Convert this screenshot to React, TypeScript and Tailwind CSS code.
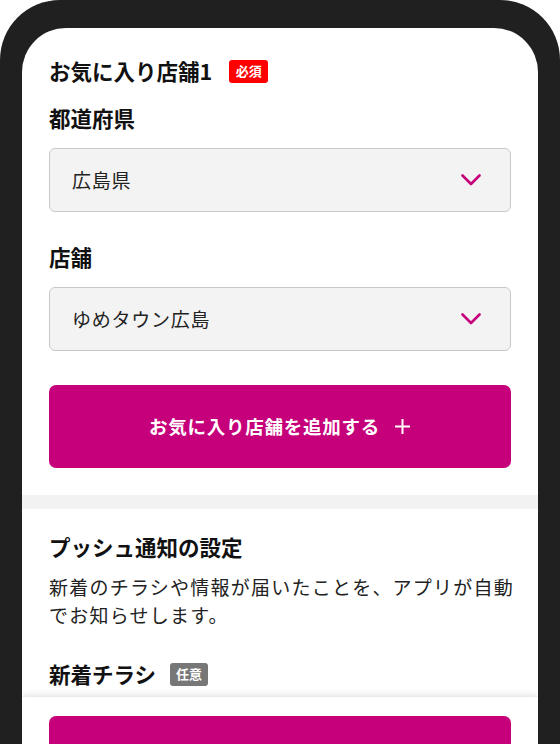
import React from "react";

const Chevron = () => (
  <svg width="20" height="12" viewBox="0 0 20 12" fill="none">
    <polyline points="1.5,1.5 10,10 18.5,1.5" stroke="#c6007a" strokeWidth="2.6" strokeLinecap="round" strokeLinejoin="round" />
  </svg>
);

const Select = ({ value }: { value: string }) => (
  <div className="h-[64px] rounded-[6px] border border-[#c8c8c8] bg-[#f3f3f3] flex items-center justify-between pl-[22px] pr-[29px]">
    <span className="text-[19px] tracking-[0.04em] text-[#222]">{value}</span>
    <Chevron />
  </div>
);

export default function App() {
  return (
    <div
      className="w-[560px] h-[744px] bg-white overflow-hidden"
      style={{ fontFamily: '"Noto Sans CJK JP", "Noto Sans", sans-serif' }}
    >
      <div className="h-full rounded-t-[60px] bg-[#202020] pt-[28px] px-[22px]">
        <div className="h-full rounded-t-[44px] bg-white overflow-hidden flex flex-col">
          <div className="flex-1 overflow-hidden">
            <div className="px-[27px] pt-[28px] pb-[27px]">
              <div className="flex items-center h-[30px]">
                <span className="text-[21.5px] leading-[30px] font-bold text-[#111]">お気に入り店舗1</span>
                <span className="ml-[17px] h-[23px] w-[39px] rounded-[3px] bg-[#ff0000] text-white text-[13px] font-bold flex items-center justify-center">必須</span>
              </div>
              <div className="mt-[17px] text-[21.5px] leading-[30px] font-bold text-[#111]">都道府県</div>
              <div className="mt-[15px]">
                <Select value="広島県" />
              </div>
              <div className="mt-[30px] text-[21.5px] leading-[30px] font-bold text-[#111]">店舗</div>
              <div className="mt-[15px]">
                <Select value="ゆめタウン広島" />
              </div>
              <button className="mt-[34px] w-full h-[83px] rounded-[7px] bg-[#c6007a] text-white flex items-center justify-center gap-[14px]">
                <span className="text-[18.5px] font-bold tracking-[0.04em]">お気に入り店舗を追加する</span>
                <svg width="17" height="17" viewBox="0 0 17 17" fill="none">
                  <path d="M8.5 1v15M1 8.5h15" stroke="white" strokeWidth="2" />
                </svg>
              </button>
            </div>
            <div className="h-[14px] bg-[#f2f2f2]" />
            <div className="px-[27px] pt-[23px]">
              <div className="text-[21.5px] leading-[30px] font-bold text-[#111]">プッシュ通知の設定</div>
              <p className="mt-[11px] mr-[-6px] text-[19px] leading-[28px] tracking-[0.065em] text-[#222]">
                新着のチラシや情報が届いたことを、アプリが自動でお知らせします。
              </p>
              <div className="mt-[30px] flex items-center h-[30px]">
                <span className="text-[21.5px] leading-[30px] font-bold text-[#111]">新着チラシ</span>
                <span className="ml-[14px] h-[23px] w-[38px] rounded-[3px] bg-[#777777] text-white text-[13px] font-bold flex items-center justify-center">任意</span>
              </div>
            </div>
          </div>
          <div className="relative h-[47px] shrink-0 bg-white shadow-[0_-2px_6px_rgba(0,0,0,0.12)] px-[27px] pt-[19px]">
            <div className="h-[60px] rounded-[7px] bg-[#c6007a]" />
          </div>
        </div>
      </div>
    </div>
  );
}
